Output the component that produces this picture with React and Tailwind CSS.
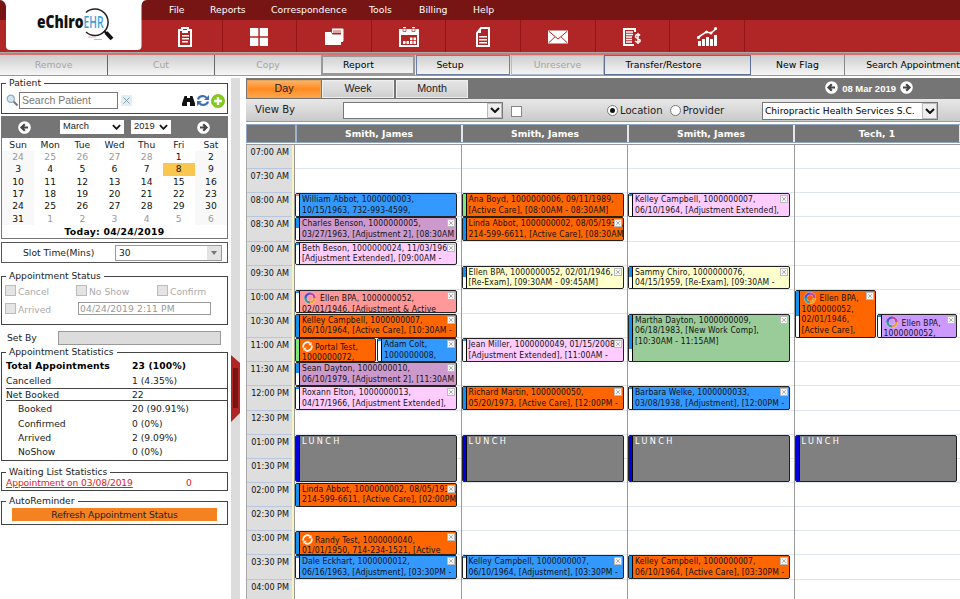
import React from "react";

const menu = [
  ["File", "w-[41px]"],
  ["Reports", "w-[61px]"],
  ["Correspondence", "w-[98px]"],
  ["Tools", "w-[50px]"],
  ["Billing", "w-[54px]"],
  ["Help", "w-[40px]"],
];

const toolIcons = [
  <g key="clip">
    <path d="M4 3h3V1h6v2h3v16H4z" fill="none" stroke="#fff" strokeWidth="2" />
    <path d="M7 3h6v3H7zM7 8h7v1.6H7zM7 11h7v1.6H7zM7 14h6v1.6H7z" fill="#fff" />
  </g>,
  <path key="grid" d="M1 1h8.3v8.3H1zM10.8 1H19v8.3h-8.2zM1 10.8h8.3V19H1zM10.8 10.8H19V19h-8.2z" fill="#fff" />,
  <g key="folder">
    <path d="M8 2h11v13h-2V6H8z" fill="#fff" />
    <path d="M8 2h11v12" fill="none" stroke="#fff" />
    <path d="M9 4h8M9 6h8" stroke="#b02626" strokeWidth=".8" />
    <path d="M1 5h6l1.5 2.5H17V18H1z" fill="#fff" />
  </g>,
  <g key="cal">
    <path d="M1 3h18v16H1z" fill="none" stroke="#fff" strokeWidth="2" />
    <path d="M0 3h20v5H0zM4 0h3v4H4zM13 0h3v4h-3z" fill="#fff" />
    <path d="M4 1.5h3v3H4zM13 1.5h3v3h-3z" fill="none" stroke="#b02626" strokeWidth=".7" />
    <path d="M4 14h2.5v3H4zM7.5 14H10v3H7.5zM11 14h2.5v3H11zM14.5 14H17v3h-2.5zM11 10.5h2.5v2.7H11zM14.5 10.5H17v2.7h-2.5z" fill="#fff" />
  </g>,
  <g key="doc">
    <path d="M8 1h8v18H4V6z" fill="none" stroke="#fff" strokeWidth="2" />
    <path d="M8 1v5H4zM6 9h8v1.5H6zM6 12h8v1.5H6zM6 15h8v1.5H6z" fill="#fff" />
  </g>,
  <g key="mail">
    <path d="M0 3.5h20v13H0z" fill="#fff" />
    <path d="M.7 4.2L10 12l9.300-7.800M.7 15.800L7 9.800M19.300 15.800L13 9.800" fill="none" stroke="#b02626" strokeWidth="1" />
  </g>,
  <g key="bill">
    <path d="M13 5V2H2v16h10" fill="none" stroke="#fff" strokeWidth="2" />
    <path d="M4 5h7M4 7.500h7M4 10h6M4 12.500h6M4 15h6" stroke="#fff" strokeWidth="1.300" />
    <path d="M18 8.500c-1-1.500-4.500-1.200-4.500 1 0 2.400 4.700 1.500 4.700 4 0 2.200-3.800 2.400-5 .4M16 6v11" fill="none" stroke="#fff" strokeWidth="1.500" />
  </g>,
  <g key="chart">
    <path d="M1 14h3v5H1zM5 12h3v7H5zM9 10h3v9H9zM13 12h3v7h-3zM17 8h3v11h-3z" fill="#fff" />
    <path d="M0 11l9-6 5 1 6-5" fill="none" stroke="#fff" strokeWidth="1.600" />
    <circle cx="1.500" cy="10.500" r="1.500" fill="#fff" />
    <circle cx="9.500" cy="5" r="1.500" fill="#fff" />
    <circle cx="14" cy="6" r="1.500" fill="#fff" />
    <circle cx="18.500" cy="1.500" r="1.500" fill="#fff" />
  </g>,
];

const actions = [
  ["Remove", "w-[108px] text-[#a5a5a5] border-r border-[#666]"],
  ["Cut", "w-[107px] text-[#a5a5a5] border-r border-[#666]"],
  ["Copy", "w-[106px] text-[#a5a5a5]"],
  ["Report", "w-[94px] text-black border-2 border-[#999] pr-[19px]"],
  ["Setup", "w-[94px] ml-px text-black border border-[#6b7fa5] pr-[26px]"],
  ["Unreserve", "w-[93px] ml-px text-[#a5a5a5] border border-[#aebbd0]"],
  ["Transfer/Restore", "w-[147px] text-black border border-[#5a6e96] pr-[28px]"],
  ["New Flag", "w-[94px] text-black border-r border-[#888]"],
  ["Search Appointment", "w-[115px] text-black pl-[21px] tracking-[-0.100px]"],
];

const weeks = [
  [24, 25, 26, 27, 28, 1, 2],
  [3, 4, 5, 6, 7, 8, 9],
  [10, 11, 12, 13, 14, 15, 16],
  [17, 18, 19, 20, 21, 22, 23],
  [24, 25, 26, 27, 28, 29, 30],
  [31, 1, 2, 3, 4, 5, 6],
];

const times = [
  "07:00 AM", "07:30 AM", "08:00 AM", "08:30 AM", "09:00 AM", "09:30 AM", "10:00 AM", "10:30 AM", "11:00 AM", "11:30 AM",
  "12:00 PM", "12:30 PM", "01:00 PM", "01:30 PM", "02:00 PM", "02:30 PM", "03:00 PM", "03:30 PM", "04:00 PM",
];

const OR = "bg-[#ff6600]";
const BL = "bg-[#3399ff]";
const PU = "bg-[#cc99cc]";
const PK = "bg-[#ffccff]";
const YE = "bg-[#ffffcc]";
const sBlue = "bg-[#1690ee] h-full";
const sHalf = "bg-[#1690ee] h-[10px]";
const sTop = "bg-[#1690ee] h-[2px]";
const sGreen = "bg-[#7be87b] h-full";
const sRed = "bg-[#e88] h-[2px]";

// row: index of the half-hour slot, span: slots covered, side: 1 or 2 when a slot is shared
const columns = [
  {
    name: "Smith, James",
    events: [
      { row: 2, bg: BL, strip: sRed, lines: ["William Abbot, 1000000003,", "10/15/1963, 732-993-4599,"] },
      { row: 3, bg: PU, strip: sHalf, x: true, lines: ["Charles Benson, 1000000005,", "03/27/1963, [Adjustment 2], [08:30AM"] },
      { row: 4, bg: PK, strip: sTop, x: true, lines: ["Beth Beson, 1000000024, 11/03/1969,", "[Adjustment Extended], [09:00AM -"] },
      { row: 6, bg: "bg-[#ff9999]", strip: sTop, x: true, icon: "ring", lines: ["Ellen BPA, 1000000052,", "02/01/1946, [Adjustment & Active"] },
      { row: 7, bg: OR, strip: sBlue, x: true, lines: ["Kelley Campbell, 1000000007,", "06/10/1964, [Active Care], [10:30AM -"] },
      { row: 8, side: 1, bg: OR, strip: sGreen, icon: "sync", lines: ["Portal Test,", "1000000072,"] },
      { row: 8, side: 2, bg: BL, strip: sTop, x: true, lines: ["Adam Colt,", "1000000008,"] },
      { row: 9, bg: PU, strip: sHalf, x: true, lines: ["Sean Dayton, 1000000010,", "06/10/1979, [Adjustment 2], [11:30AM"] },
      { row: 10, bg: PK, strip: sTop, x: true, lines: ["Roxann Elton, 1000000013,", "04/17/1966, [Adjustment Extended],"] },
      { row: 12, span: 2, lunch: true },
      { row: 14, bg: OR, strip: sBlue, x: true, lines: ["Linda Abbot, 1000000002, 08/05/1934,", "214-599-6611, [Active Care], [02:00PM"] },
      { row: 16, bg: OR, strip: sBlue, x: true, icon: "sync", lines: ["Randy Test, 1000000040,", "01/01/1950, 714-234-1521, [Active"] },
      { row: 17, bg: BL, strip: sTop, x: true, lines: ["Dale Eckhart, 1000000012,", "06/16/1963, [Adjustment], [03:30PM -"] },
    ],
  },
  {
    name: "Smith, James",
    events: [
      { row: 2, bg: OR, strip: sGreen, lines: ["Ana Boyd, 1000000006, 09/11/1989,", "[Active Care], [08:00AM - 08:30AM]"] },
      { row: 3, bg: OR, strip: sBlue, x: true, lines: ["Linda Abbot, 1000000002, 08/05/1934,", "214-599-6611, [Active Care], [08:30AM"] },
      { row: 5, bg: YE, strip: sHalf, x: true, lines: ["Ellen BPA, 1000000052, 02/01/1946,", "[Re-Exam], [09:30AM - 09:45AM]"] },
      { row: 8, bg: PK, strip: sTop, x: true, lines: ["Jean Miller, 1000000049, 01/15/2008,", "[Adjustment Extended], [11:00AM -"] },
      { row: 10, bg: OR, strip: sBlue, x: true, lines: ["Richard Martin, 1000000050,", "05/20/1973, [Active Care], [12:00PM -"] },
      { row: 12, span: 2, lunch: true },
      { row: 17, bg: BL, strip: sTop, x: true, lines: ["Kelley Campbell, 1000000007,", "06/10/1964, [Adjustment], [03:30PM -"] },
    ],
  },
  {
    name: "Smith, James",
    events: [
      { row: 2, bg: PK, strip: sTop, x: true, lines: ["Kelley Campbell, 1000000007,", "06/10/1964, [Adjustment Extended],"] },
      { row: 5, bg: YE, strip: sHalf, x: true, lines: ["Sammy Chiro, 1000000076,", "04/15/1959, [Re-Exam], [09:30AM -"] },
      { row: 7, span: 2, bg: "bg-[#99cc99]", strip: "bg-[#1690ee] h-[34px]", x: true, lines: ["Martha Dayton, 1000000009,", "06/18/1983, [New Work Comp],", "[10:30AM - 11:15AM]"] },
      { row: 10, bg: BL, strip: sTop, x: true, lines: ["Barbara Welke, 1000000033,", "03/08/1938, [Adjustment], [12:00PM -"] },
      { row: 12, span: 2, lunch: true },
      { row: 17, bg: OR, strip: sBlue, x: true, lines: ["Kelley Campbell, 1000000007,", "06/10/1964, [Active Care], [03:30PM -"] },
    ],
  },
  {
    name: "Tech, 1",
    events: [
      { row: 6, span: 2, side: 1, bg: OR, strip: "bg-[#1690ee] h-[25px]", x: true, icon: "ring", lines: ["Ellen BPA,", "1000000052,", "02/01/1946,", "[Active Care],"] },
      { row: 7, side: 2, bg: "bg-[#cc99ff]", strip: sTop, x: true, icon: "ring", lines: ["Ellen BPA,", "1000000052,"] },
      { row: 12, span: 2, lunch: true },
    ],
  },
];

function RingIcon() {
  return (
    <svg className="ml-[2px] mr-[4px] h-[12px] w-[12px] shrink-0" viewBox="0 0 12 12" fill="none" strokeWidth="2.600">
      <circle cx="6" cy="6" r="4.500" stroke="#e8f0ff" strokeWidth="3" />
      <path d="M6 1.500A4.500 4.500 0 0 1 10.500 6" stroke="#c542a8" />
      <path d="M10.500 6A4.500 4.500 0 0 1 6 10.500" stroke="#e8a030" />
      <path d="M6 10.500A4.500 4.500 0 0 1 1.500 6" stroke="#3a9a9a" />
      <path d="M1.500 6A4.500 4.500 0 0 1 6 1.500" stroke="#5a50d8" />
    </svg>
  );
}

function SyncIcon() {
  return (
    <svg className="mr-[2px] h-[11px] w-[11px] shrink-0" viewBox="0 0 11 11" fill="none" stroke="#fff" strokeWidth="1.700">
      <path d="M1.300 6.500A4.200 4.200 0 0 1 8 2.200M9.700 4.500A4.200 4.200 0 0 1 3 8.800" />
      <path d="M9.500 1v3.200H6.300zM1.500 10V6.800h3.200z" fill="#fff" stroke="none" />
    </svg>
  );
}

function Event({ e }) {
  const { row, span = 1, side } = e;
  const place = {
    gridRow: `${row + 1} / span ${span}`,
    gridColumn: side ? `${side} / span 1` : "1 / span 2",
  };
  if (e.lunch) {
    return (
      <div style={place} className="mb-px flex overflow-hidden rounded-[2px] border border-[#222] bg-[#808080]">
        <div className="w-[4px] border-r border-black bg-[#0000e0]" />
        <div className="pl-[2px] text-[9px] leading-[11px] tracking-[2.400px] text-white">LUNCH</div>
      </div>
    );
  }
  return (
    <div style={place} className={"relative mb-[0.500px] flex min-w-0 overflow-hidden rounded-[2px] border border-[#222] " + e.bg + (side === 2 ? " ml-px" : "")}>
      <div className="w-[4px] shrink-0 border-r border-black bg-white">
        <div className={e.strip} />
      </div>
      <div className="min-w-0 overflow-hidden whitespace-nowrap pl-[2px] text-[8.500px] leading-[10.400px] tracking-[0.120px] text-[#111]">
        {e.lines.map((l, i) => (
          <div key={i} className={i === 0 && e.icon ? "flex h-[13px] items-end" : ""}>
            {i === 0 && e.icon === "ring" && <RingIcon />}
            {i === 0 && e.icon === "sync" && <SyncIcon />}
            <span>{l}</span>
          </div>
        ))}
      </div>
      {e.x && (
        <svg className="absolute right-px top-px h-[8px] w-[8px]" viewBox="0 0 8 8">
          <rect x=".5" y=".5" width="7" height="7" fill="#f5f5f5" stroke="#bbb" />
          <path d="M2.200 2.200l3.600 3.600M5.800 2.200L2.200 5.800" stroke="#999" strokeWidth=".8" />
        </svg>
      )}
    </div>
  );
}

function ArrowBtn({ right }) {
  return (
    <svg className={"h-[13px] w-[13px] " + (right ? "-scale-x-100" : "")} viewBox="0 0 13 13">
      <circle cx="6.500" cy="6.500" r="6.300" fill="#fff" />
      <path d="M6.800 3.200L3.500 6.500 6.800 9.800M3.700 6.500H10" fill="none" stroke="#444" strokeWidth="2.200" />
    </svg>
  );
}

function Chevron({ className }) {
  return (
    <svg className={className} viewBox="0 0 10 6" fill="none" stroke="#111" strokeWidth="2">
      <path d="M1 1l4 4 4-4" />
    </svg>
  );
}

function Group({ title, className, children }) {
  return (
    <fieldset className={"min-w-0 border border-[#444] " + className}>
      <legend className="ml-[4px] h-[10px] px-[3px] leading-[10px]">{title}</legend>
      {children}
    </fieldset>
  );
}

function Check({ label, className }) {
  return (
    <div className={"flex items-center gap-[2px] text-[#aaa] " + className}>
      <span className="h-[11px] w-[11px] border border-[#bbb] bg-[#e4e4e4]" />
      <span className="relative top-px">{label}</span>
    </div>
  );
}

function Stat({ label, value, className = "" }) {
  return (
    <div className={"flex items-center " + className}>
      <span className="flex-1">{label}</span>
      <span className="w-[95px]">{value}</span>
    </div>
  );
}

function Header() {
  return (
    <header className="flex h-[52px] bg-gradient-to-b from-[#771414] from-[20px] to-[#b02626] to-[20px]">
      <div className="flex w-[147px] shrink-0 items-start">
        <svg className="h-[52px] w-[147px]" viewBox="0 0 147 52">
          <path d="M0 0H147C143 0 141.500 3 141.500 7V46q0 4-4 4H10q-4 0-4-4V7C6 3 3 0 0 0z" fill="#fff" />
          <path d="M86 12.500A13.200 13.200 0 1 1 86 32" fill="none" stroke="#222" strokeWidth="1.500" />
          <path d="M104 31l3 2.500" stroke="#111" strokeWidth="2" />
          <path d="M106 32.500l6 6.500" stroke="#111" strokeWidth="4" />
          <path d="M88 37h8M94 39.500h8" stroke="#c99" strokeWidth=".8" />
          <text x="37" y="27.500" fontFamily="Open Sans, sans-serif" fontWeight="800" fontSize="18" fill="#111">
            <tspan textLength="46.500" lengthAdjust="spacingAndGlyphs">eChiro</tspan>
            <tspan fontWeight="600" fontSize="15.500" textLength="20" lengthAdjust="spacingAndGlyphs" fill="#3a9fd8">EHR</tspan>
          </text>
        </svg>
      </div>
      <div className="flex-1">
        <nav className="flex h-[20px] items-center pl-[22px] text-[9.300px] text-white">
          {menu.map(([m, w]) => (
            <span key={m} className={w}>{m}</span>
          ))}
        </nav>
        <div className="flex h-[32px] pl-[1px]">
          {toolIcons.map((ic, i) => (
            <div key={i} className="flex w-[74.600px] items-center justify-center border-r border-[#941515] pt-px">
              <svg className="h-[20px] w-[20px]" viewBox="0 0 20 20">{ic}</svg>
            </div>
          ))}
        </div>
      </div>
    </header>
  );
}

function Sidebar() {
  return (
    <aside className="ml-px w-[227px] shrink-0 text-[9.200px] text-[#222]">
      <Group title="Patient" className="h-[36px]">
        <div className="flex items-center pl-[4px] pr-[2px] pt-[4px]">
          <svg className="h-[13px] w-[13px]" viewBox="0 0 13 13">
            <path d="M7 7l4.500 4.500" stroke="#777" strokeWidth="2" />
            <circle cx="4.800" cy="4.800" r="3.600" fill="#cfe6f7" stroke="#9ab" strokeWidth="1.200" />
          </svg>
          <div className="flex h-[17px] w-[99px] items-center border border-[#777] bg-white pl-[2px] font-['Liberation_Sans'] text-[10.500px] text-[#777]">Search Patient</div>
          <svg className="ml-[3px] h-[11px] w-[11px]" viewBox="0 0 11 11">
            <rect width="11" height="11" fill="#e3edf4" />
            <path d="M2.500 2.500l6 6M8.500 2.500l-6 6" stroke="#8a9fb0" />
          </svg>
          <div className="ml-auto flex items-center gap-px">
            <svg className="h-[12px] w-[13px]" viewBox="0 0 13 12" fill="#111">
              <path d="M2.500 1h2.500v2h3V1h2.500L13 8.500V11H8V7H5v4H0V8.500z" />
            </svg>
            <svg className="h-[13px] w-[14px]" viewBox="0 0 14 13" fill="none" stroke="#3f70b0" strokeWidth="2.200">
              <path d="M2 5.500C3 1.500 9 1 10.500 4M12 7.500c-1 4-7 4.500-8.500 1.500" />
              <path d="M13 1v5H8zM1 12V7h5z" fill="#3f70b0" stroke="none" />
            </svg>
            <svg className="h-[14px] w-[14px]" viewBox="0 0 14 14">
              <circle cx="7" cy="7" r="6.600" fill="#83cc1c" stroke="#6bb010" strokeWidth=".6" />
              <path d="M7 3v8M3 7h8" stroke="#fff" strokeWidth="2.300" />
            </svg>
          </div>
        </div>
      </Group>

      <div className="mt-[2px] h-[123px] border-x border-b border-[#777] bg-white">
        <div className="flex h-[22px] items-center bg-[#757575] pl-[16px] pr-[17px] font-['Liberation_Sans'] text-[9.300px]">
          <ArrowBtn />
          <div className="ml-[29px] flex h-[14px] w-[64px] items-center justify-between bg-white px-[3px]">
            March <Chevron className="h-[6px] w-[9px]" />
          </div>
          <div className="ml-[7px] flex h-[14px] w-[40px] items-center justify-between bg-white px-[3px]">
            2019 <Chevron className="h-[6px] w-[9px]" />
          </div>
          <div className="ml-auto"><ArrowBtn right /></div>
        </div>
        <div className="grid h-[13px] grid-cols-7 items-center text-center leading-[13px]">
          {["Sun", "Mon", "Tue", "Wed", "Thu", "Fri", "Sat"].map((d) => <span key={d}>{d}</span>)}
        </div>
        {weeks.map((w, r) => (
          <div key={r} className="grid h-[12.350px] grid-cols-7 text-center leading-[12.350px]">
            {w.map((d, c) => {
              const out = (r === 0 && d > 20) || (r === 5 && d < 20);
              const bg = d === 8 ? "bg-[#f9c650]" : c === 0 || c === 6 ? "bg-[#f8f8f8]" : "";
              return <span key={c} className={bg + (out ? " text-[#999]" : " text-[#111]")}>{d}</span>;
            })}
          </div>
        ))}
        <div className="text-center text-[9.300px] font-bold leading-[13px] tracking-[0.250px] text-black">Today: 04/24/2019</div>
      </div>

      <div className="mt-[3px] flex h-[21px] items-center border border-[#555] pl-[21px]">
        <span className="w-[92px]">Slot Time(Mins)</span>
        <div className="flex h-[16px] w-[107px] items-center justify-between border border-[#999] bg-white pl-[3px]">
          30
          <span className="flex h-full w-[14px] items-center justify-center bg-[#e3e3e3]">
            <svg className="h-[4px] w-[6px]" viewBox="0 0 6 4"><path d="M0 0h6L3 4z" fill="#777" /></svg>
          </span>
        </div>
      </div>

      <Group title="Appointment Status" className="mt-[8px] h-[54px]">
        <div className="mt-[3px] flex h-[13px] items-center pl-[3px]">
          <Check label="Cancel" className="w-[71px]" />
          <Check label="No Show" className="w-[81px]" />
          <Check label="Confirm" className="" />
        </div>
        <div className="mt-[4px] flex h-[15px] items-center pl-[3px]">
          <Check label="Arrived" className="w-[73px]" />
          <div className="h-[13px] w-[133px] border border-[#999] pl-px leading-[12px] tracking-[0.100px] text-[#999]">04/24/2019 2:11 PM</div>
        </div>
      </Group>

      <div className="flex h-[22px] items-center pl-[6px] pt-[3px]">
        <span className="w-[51px]">Set By</span>
        <div className="h-[14px] w-[163px] border border-[#999] bg-[#dcdcdc]" />
      </div>

      <Group title="Appointment Statistics" className="h-[114px]">
        <div className="pl-[4px] pt-px">
          <Stat label="Total Appointments" value="23 (100%)" className="h-[16px] font-bold tracking-[0.150px] text-black" />
          <Stat label="Cancelled" value="1 (4.35%)" className="h-[14px] pb-px" />
          <Stat label="Net Booked" value="22" className="h-[13px] border-y border-[#444]" />
          <Stat label="Booked" value="20 (90.91%)" className="h-[16px] pl-[12px]" />
          <Stat label="Confirmed" value="0 (0%)" className="h-[14px] pl-[12px]" />
          <Stat label="Arrived" value="2 (9.09%)" className="h-[14px] pl-[12px]" />
          <Stat label="NoShow" value="0 (0%)" className="h-[14px] pl-[12px]" />
        </div>
      </Group>

      <Group title="Waiting List Statistics" className="mt-[6px] h-[24px]">
        <div className="flex pl-[4px] leading-[12px] text-[#dd1c24]">
          <span className="w-[180px] tracking-[-0.120px]"><u>Appointment on 03/08/2019</u></span>
          <span>0</span>
        </div>
      </Group>

      <Group title="AutoReminder" className="mt-[5px] h-[29px]">
        <div className="ml-[10px] mt-[2px] h-[13px] w-[205px] bg-[#f58220] text-center leading-[13px] tracking-[-0.120px] text-[#222]">Refresh Appointment Status</div>
      </Group>
    </aside>
  );
}

function Radio({ on, label }) {
  return (
    <span className="flex items-center gap-[2px]">
      <span className="flex h-[11px] w-[11px] items-center justify-center rounded-full border border-[#777] bg-white">
        {on && <span className="h-[5px] w-[5px] rounded-full bg-[#111]" />}
      </span>
      {label}
    </span>
  );
}

function Scheduler() {
  const tab = "flex h-[18px] items-center justify-center border font-['Liberation_Sans'] text-[10.700px] text-[#222] ";
  return (
    <main className="flex min-w-0 flex-1 flex-col">
      <div className="flex h-[21px] items-center bg-[#757575] pl-px">
        <div className={tab + "w-[74px] border-[#e0a860] bg-gradient-to-b from-[#ffb060] via-[#ff8a1c] to-[#ffa64a]"}>Day</div>
        <div className={tab + "ml-px w-[72px] border-[#eee] bg-gradient-to-b from-[#e6e6e6] to-[#cfcfcf]"}>Week</div>
        <div className={tab + "ml-[2px] w-[72px] border-[#eee] bg-gradient-to-b from-[#e6e6e6] to-[#cfcfcf]"}>Month</div>
        <div className="ml-auto mr-[47px] flex items-center gap-[4px] pb-[2px] font-['Liberation_Sans'] text-[9.500px] font-bold text-white">
          <ArrowBtn />
          <span className="relative top-[2px]">08 Mar 2019</span>
          <ArrowBtn right />
        </div>
      </div>
      <div className="flex h-[23px] items-center border-b border-[#999] bg-gradient-to-b from-[#e8e8e8] to-[#cacaca] pl-[9px] text-[10.100px] text-[#222]">
        <span className="w-[88px]">View By</span>
        <div className="flex h-[17px] w-[160px] justify-end border border-[#777] bg-white">
          <span className="flex w-[15px] items-center justify-center border border-[#bbb] bg-[#eee]"><Chevron className="h-[6px] w-[10px]" /></span>
        </div>
        <span className="ml-[8px] mt-[3px] h-[11px] w-[11px] border border-[#888] bg-white" />
        <div className="ml-[85px] flex gap-[7px] pt-px">
          <Radio on label="Location" />
          <Radio label="Provider" />
        </div>
        <div className="ml-auto mr-[22px] mt-px flex h-[18px] w-[176px] items-center justify-between border border-[#777] bg-white pl-[2px] text-[9.100px] text-black">
          <span className="whitespace-nowrap pt-[3px]">Chiropractic Health Services S.C.</span>
          <span className="flex h-full w-[15px] shrink-0 items-center justify-center border border-[#bbb] bg-[#eee]"><Chevron className="h-[6px] w-[10px]" /></span>
        </div>
      </div>
      <div className="mt-[2px] flex h-[19px] border-y border-l border-[#8fa5c0] bg-[#757575]">
        <div className="w-[50px] border-r-2 border-[#9db4cc]" />
        {columns.map((c, i) => (
          <div key={i} className="flex flex-1 items-center justify-center border-r-2 border-[#dfe6ee] text-[9.200px] font-bold text-white last:border-r">{c.name}</div>
        ))}
      </div>
      <div className="mt-px flex flex-1 overflow-hidden border-t border-[#999] -mb-px">
        <div className="w-[46px] shrink-0 border-l border-[#aaa] bg-[#dedede]">
          {times.map((t) => (
            <div key={t} className="flex h-[24.150px] justify-end whitespace-nowrap border-b border-[#b9c6dc] pr-[3px] pt-[2px] font-['DejaVu_Sans_Condensed','DejaVu_Sans',sans-serif] text-[9px] leading-[10px] text-[#111]">{t}</div>
          ))}
        </div>
        <div className="w-[2px] shrink-0 bg-[#f6f3c4]" />
        {columns.map((c, i) => (
          <div
            key={i}
            className="grid min-w-0 flex-1 grid-cols-[81px_81px] grid-rows-[repeat(19,24.150px)] border-l border-[#999] font-['DejaVu_Sans_Condensed','DejaVu_Sans',sans-serif]"
          >
            {times.map((t, r) => (
              <div key={t} style={{ gridRow: r + 1, gridColumn: "1 / span 2" }} className="mr-[-4px] border-b border-[#dfe5ee]" />
            ))}
            {c.events.map((e, k) => <Event key={k} e={e} />)}
          </div>
        ))}
      </div>
    </main>
  );
}

export default function App() {
  return (
    <div className="flex h-[599px] w-[960px] flex-col overflow-hidden bg-white font-['DejaVu_Sans',sans-serif]">
      <Header />
      <div className="h-[3px] border-t border-[#aaa] bg-[#d87070]" />
      <div className="flex h-[21px] shrink-0 border-b border-[#999] bg-gradient-to-b from-[#cecece] to-[#f6f6f6]">
        {actions.map(([label, cls]) => (
          <div key={label} className={"flex shrink-0 items-center justify-center whitespace-nowrap text-[9.300px] " + cls}>{label}</div>
        ))}
      </div>
      <div className="flex min-h-0 flex-1 pt-[2px]">
        <Sidebar />
        <div className="ml-[3px] flex w-[9px] shrink-0 items-start bg-[#dcdcdc]">
          <svg className="mt-[277px] h-[67px] w-[9px]" viewBox="0 0 9 67">
            <path d="M0 0l9 8v50l-9 9z" fill="#b02626" />
            <path d="M2 13h5v40H2z" fill="#771414" />
          </svg>
        </div>
        <div className="w-[6px] shrink-0" />
        <Scheduler />
      </div>
    </div>
  );
}
